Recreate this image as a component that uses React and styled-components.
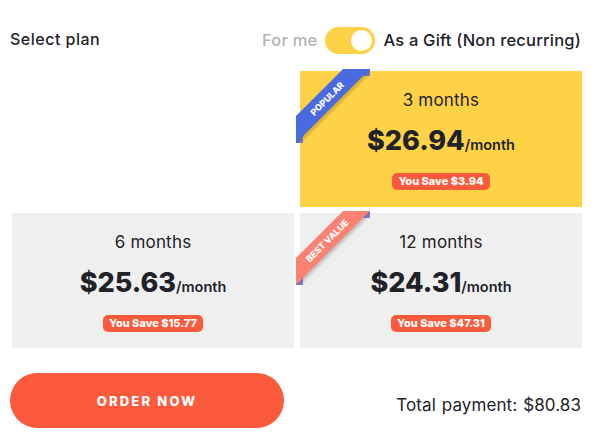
import React, { useState } from "react";
import styled, { createGlobalStyle } from "styled-components";

const Global = createGlobalStyle`
  html, body { margin: 0; padding: 0; background: #fff; }
  body { font-family: Inter, "Noto Sans", sans-serif; color: #1f2229; }
  * { box-sizing: border-box; }
`;

const Page = styled.div`
  width: 598px;
  height: 436px;
  display: flex;
  flex-direction: column;
  padding: 27px 17px 0 10px;
`;

const Header = styled.div`
  display: flex;
  align-items: center;
  justify-content: space-between;
  height: 27px;
`;

const Title = styled.div`
  font-size: 16px;
  font-weight: 500;
  margin-top: -4px;
  letter-spacing: 0.5px;
`;

const ToggleGroup = styled.div`
  display: flex;
  align-items: center;
  gap: 8px;
  font-size: 16.5px;
  font-weight: 500;
  letter-spacing: 0.2px;
`;

const Label = styled.span`
  color: ${(p) => (p.$active ? "#1f2229" : "#b3b3b3")};
  margin-top: -2px;
`;

const Switch = styled.button`
  width: 50px;
  height: 27px;
  border-radius: 14px;
  border: none;
  padding: 0;
  background: #fdd247;
  position: relative;
  cursor: pointer;
  &::after {
    content: "";
    position: absolute;
    top: 3px;
    left: ${(p) => (p.$on ? "26px" : "3px")};
    width: 21px;
    height: 21px;
    border-radius: 50%;
    background: #fff;
  }
`;

const Grid = styled.div`
  display: grid;
  grid-template-columns: 282px 282px;
  grid-template-rows: 136px 135px;
  gap: 6px;
  margin-top: 17px;
  margin-left: 2px;
`;

const Card = styled.div`
  position: relative;
  background: ${(p) => (p.$highlight ? "#fdd247" : "#efefef")};
  display: flex;
  flex-direction: column;
  align-items: center;
  padding-top: 19px;
`;

const Period = styled.div`
  font-size: 17px;
  font-weight: 400;
  height: 20px;
  line-height: 20px;
  letter-spacing: 0.2px;
`;

const Price = styled.div`
  margin-top: 14px;
  display: flex;
  align-items: baseline;
  height: 34px;
`;

const Amount = styled.span`
  font-size: 27px;
  font-weight: 800;
`;

const Per = styled.span`
  font-size: 14.5px;
  font-weight: 600;
`;

const Save = styled.div`
  margin-top: 15px;
  background: #fb5a3c;
  color: #fff;
  font-size: 11px;
  font-weight: 800;
  height: 17px;
  line-height: 17px;
  padding: 0 6px;
  border-radius: 5px;
`;

const RibbonWrap = styled.div`
  position: absolute;
  top: -2px;
  left: -4px;
  width: 74px;
  height: 74px;
  overflow: hidden;
  &::before, &::after {
    content: "";
    position: absolute;
    width: 7px;
    height: 7px;
    background: ${(p) => p.$fold};
  }
  &::before { top: 0; right: 0; }
  &::after { bottom: 0; left: 0; }
`;

const RibbonBand = styled.div`
  position: absolute;
  z-index: 1;
  width: 112px;
  height: 19px;
  left: -25px;
  top: 20px;
  transform: rotate(-45deg);
  background: ${(p) => p.$color};
  color: #fff;
  font-size: 9px;
  font-weight: 800;
  line-height: 19px;
  text-align: center;
  box-shadow: 0 3px 3px rgba(0, 0, 0, 0.18);
`;

const Footer = styled.div`
  display: flex;
  align-items: center;
  justify-content: space-between;
  margin-top: 25px;
`;

const OrderButton = styled.button`
  width: 274px;
  height: 55px;
  border: none;
  border-radius: 28px;
  background: #fb5a3c;
  color: #fff;
  font-family: Inter, "Noto Sans", sans-serif;
  font-size: 13px;
  font-weight: 800;
  letter-spacing: 2.2px;
  cursor: pointer;
`;

const Total = styled.div`
  font-size: 17px;
  font-weight: 400;
  padding-top: 9px;
  word-spacing: 1px;
  letter-spacing: 0.1px;
`;

function Ribbon({ text, color, fold }) {
  return (
    <RibbonWrap $fold={fold}>
      <RibbonBand $color={color}>{text}</RibbonBand>
    </RibbonWrap>
  );
}

function PlanCard({ period, amount, save, highlight, ribbon }) {
  return (
    <Card $highlight={highlight}>
      {ribbon && <Ribbon {...ribbon} />}
      <Period>{period}</Period>
      <Price>
        <Amount>{amount}</Amount>
        <Per>/month</Per>
      </Price>
      <Save>You Save {save}</Save>
    </Card>
  );
}

export default function App() {
  const [gift, setGift] = useState(true);
  return (
    <>
      <Global />
      <Page>
        <Header>
          <Title>Select plan</Title>
          <ToggleGroup>
            <Label $active={!gift}>For me</Label>
            <Switch $on={gift} onClick={() => setGift(!gift)} aria-label="toggle" />
            <Label $active={gift}>As a Gift (Non recurring)</Label>
          </ToggleGroup>
        </Header>
        <Grid>
          <div />
          <PlanCard
            period="3 months"
            amount="$26.94"
            save="$3.94"
            highlight
            ribbon={{ text: "POPULAR", color: "#4a6ae0", fold: "#7b82dc" }}
          />
          <PlanCard period="6 months" amount="$25.63" save="$15.77" />
          <PlanCard
            period="12 months"
            amount="$24.31"
            save="$47.31"
            ribbon={{ text: "BEST VALUE", color: "#f98272", fold: "#8a8ade" }}
          />
        </Grid>
        <Footer>
          <OrderButton>ORDER NOW</OrderButton>
          <Total>Total payment: $80.83</Total>
        </Footer>
      </Page>
    </>
  );
}
